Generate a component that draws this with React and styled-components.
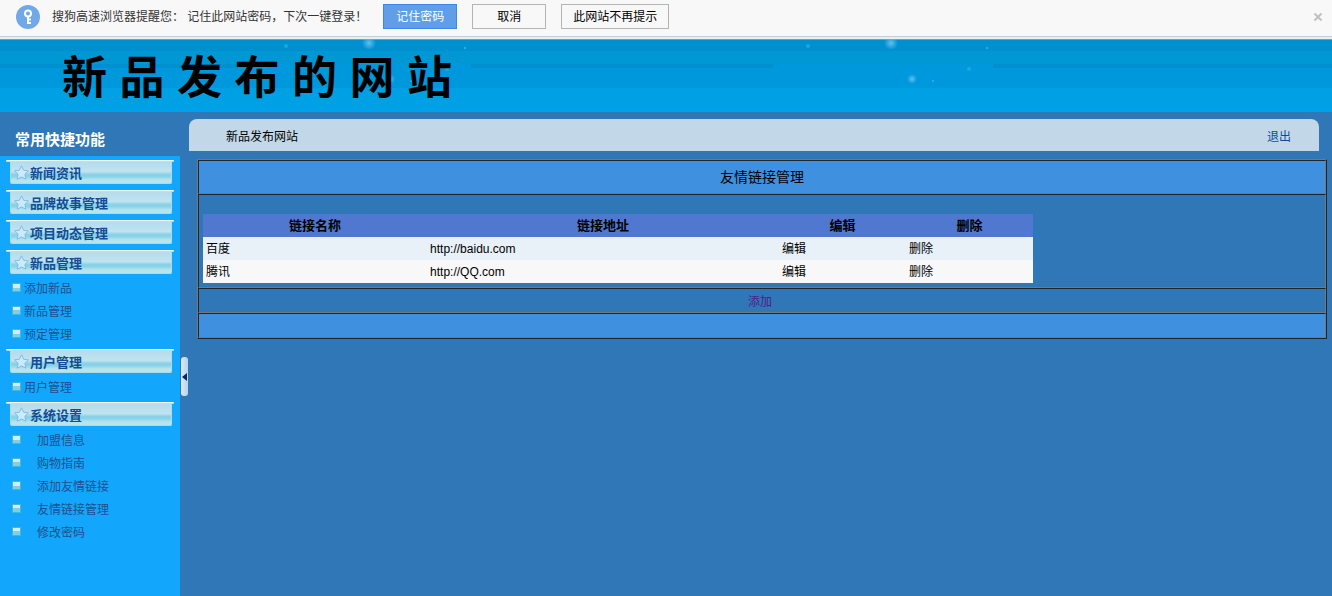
import styled, { createGlobalStyle } from 'styled-components'

const GlobalStyle = createGlobalStyle`
  * {
    box-sizing: border-box;
  }
  body {
    margin: 0;
    background: #3077b8;
    font-family: "Liberation Sans", "Noto Sans CJK SC", sans-serif;
    font-size: 12px;
    color: #000;
  }
  a {
    color: inherit;
    text-decoration: none;
  }
  ul {
    list-style: none;
    margin: 0;
    padding: 0;
  }
`

const Page = styled.div`
  display: flex;
  flex-direction: column;
  min-height: 100vh;
`

const NoticeBar = styled.div`
  display: flex;
  align-items: center;
  gap: 15px;
  padding: 4px 9px 7px 16px;
  background: #f8f8f8;
  border-bottom: 1px solid #ccc;
`

const NoticeText = styled.div`
  display: flex;
  align-items: center;
  gap: 12px;
  padding-right: 1px;
  line-height: 24px;
  color: #333;
  white-space: nowrap;
`

const NoticeButton = styled.button`
  min-width: 74px;
  height: 25px;
  padding: 2px 11px 0;
  border: 1px solid ${({ $primary }) => ($primary ? '#4088e8' : '#b4b4b4')};
  background: ${({ $primary }) => ($primary ? '#609ee8' : '#f8f8f8')};
  color: ${({ $primary }) => ($primary ? '#fff' : '#000')};
  font: inherit;
  line-height: 21px;
`

const CloseButton = styled.button`
  display: flex;
  margin-left: auto;
  padding: 0;
  border: 0;
  background: none;
`

const Banner = styled.header`
  position: relative;
  height: 75px;
  padding: 7px 62px 0;
  border-top: 2px solid #e4f0f8;
  background: linear-gradient(
    #58a8cc 0 1px,
    #0090d0 1px 12px,
    #0098d4 12px 25px,
    #0090d0 25px 29px,
    #0098dc 29px 49px,
    #00a0e4 49px 70px,
    #00a0ec 70px
  );
`

const SiteTitle = styled.h1`
  position: relative;
  margin: 0;
  font-size: 45px;
  line-height: 66px;
  font-weight: 700;
  white-space: nowrap;
`

const Sparkles = styled.svg`
  position: absolute;
  top: 0;
  left: ${({ $left }) => $left}px;
`

const Main = styled.div`
  display: flex;
  flex: 1;
`

const Sidebar = styled.nav`
  flex: 0 0 180px;
  display: flex;
  flex-direction: column;
`

const SidebarTitle = styled.h2`
  margin: 0;
  padding: 13px 15px 1px;
  font-size: 15px;
  line-height: 30px;
  color: #fff;
`

const Menu = styled.div`
  flex: 1;
  background: #12a7fd;
`

const GroupTitle = styled.h3`
  margin: 0;
  padding: 4px 6px 2px;
  font-size: 13px;
  color: #144c94;
`

const GroupLine = styled.div`
  height: 2px;
  border-radius: 1px;
  background: linear-gradient(#fff 1px, #b8e0f8 1px);
`

const GroupLink = styled.a`
  display: flex;
  align-items: center;
  height: 22px;
  margin: 0 2px 0 4px;
  padding: 0 2px 0 3px;
  gap: 1px;
  border: 1px solid #a8dce8;
  border-top: 0;
  border-radius: 0 0 2px 2px;
  background: linear-gradient(#b4dcec, #c0e4f0 45%, #88d0e8 60%, #88d4e8 70%, #b8e4ec 85%);
`

const SubItem = styled.li`
  display: flex;
  align-items: center;
  gap: ${({ $wide }) => ($wide ? 16 : 3)}px;
  height: 23px;
  padding: 0 0 1px 12px;
  color: #20508c;
`

const Bullet = styled.i`
  width: 9px;
  height: 9px;
  border: 1px solid #40b8d8;
  background: linear-gradient(#d0ecf4 50%, #80d0e4 50%);
`

const Splitter = styled.div`
  flex: 0 0 9px;
  padding: 245px 1px 0;
`

const SplitterHandle = styled.button`
  display: flex;
  align-items: center;
  justify-content: center;
  width: 7px;
  height: 39px;
  padding: 0;
  border: 0;
  border-radius: 3px;
  background: linear-gradient(90deg, #d8e8f4, #b8d4ec);
`

const Content = styled.main`
  flex: 1;
  min-width: 0;
  padding: 7px 5px 0 0;
`

const TopBar = styled.div`
  display: flex;
  justify-content: space-between;
  margin-right: 8px;
  padding: 4px 28px 0 37px;
  line-height: 28px;
  border-radius: 8px 8px 0 0;
  background: #c2d8e8;
  a {
    color: #0c4c98;
  }
`

/* outset frame, with inset cells inside it */
const Panel = styled.section`
  margin: 8px 0 0 8px;
  border: 1px solid;
  border-color: #787878 #242424 #242424 #787878;
`

const PanelCell = styled.div`
  min-height: 25px;
  border: 1px solid;
  border-color: #242424 #787878 #787878 #242424;
  text-align: center;
  background: ${({ $bright }) => ($bright ? '#4090e0' : 'transparent')};
`

const PanelTitle = styled.h2`
  margin: 0;
  font-size: 14px;
  line-height: 32px;
  font-weight: 400;
`

const AddLink = styled.a`
  display: block;
  padding: 3px 4px 0 0;
  line-height: 20px;
  color: #551a8b;
`

const LinkTable = styled.table`
  width: 830px;
  max-width: 100%;
  margin: 19px 4px 4px;
  border-collapse: collapse;
  table-layout: fixed;
  text-align: left;
  th,
  td {
    height: 23px;
    padding: 2px 3px 0;
    line-height: 21px;
  }
  th {
    padding-top: 0;
    line-height: 23px;
    font-size: 13px;
    text-align: center;
    background: #5078d0;
  }
  tbody tr {
    background: #f8f8f8;
  }
  tbody tr:nth-child(odd) {
    background: #e8f0f8;
  }
`

const Col = styled.col`
  width: ${({ $width }) => $width};
`

const menu = [
  { title: '新闻资讯', items: [] },
  { title: '品牌故事管理', items: [] },
  { title: '项目动态管理', items: [] },
  { title: '新品管理', items: ['添加新品', '新品管理', '预定管理'] },
  { title: '用户管理', items: ['用户管理'] },
  {
    title: '系统设置',
    wide: true,
    items: ['加盟信息', '购物指南', '添加友情链接', '友情链接管理', '修改密码'],
  },
]

const links = [
  { name: '百度', url: 'http://baidu.com' },
  { name: '腾讯', url: 'http://QQ.com' },
]

function KeyIcon() {
  return (
    <svg width="24" height="24" viewBox="0 0 24 24" fill="none">
      <circle cx="12" cy="12" r="12" fill="#70a8e8" />
      <circle cx="12" cy="8.5" r="3" stroke="#fff" strokeWidth="2" />
      <path d="M12 11.5V19M12 14.5h3M12 18h3" stroke="#fff" strokeWidth="2" />
    </svg>
  )
}

function StarIcon() {
  return (
    <svg width="15" height="16" viewBox="0 0 15 16">
      <path
        d="M7.5 .8l2.1 4.4 4.8.7-3.5 3.4.9 4.9-4.3-2.3-4.3 2.3.9-4.9L.6 5.9l4.8-.7z"
        fill="#c8ecfc"
        stroke="#88b8e4"
        strokeLinejoin="round"
      />
    </svg>
  )
}

function BannerSparkles({ left }) {
  return (
    <Sparkles $left={left} width="240" height="73" aria-hidden="true">
      <defs>
        <radialGradient id={`glow${left}`}>
          <stop offset="0" stopColor="#60c0f0" />
          <stop offset="1" stopColor="#60c0f0" stopOpacity="0" />
        </radialGradient>
      </defs>
      <path d="M3 25h220v24H3z" fill="#0098dc" />
      <circle cx="121" cy="4" r="7" fill={`url(#glow${left})`} />
      <circle cx="142" cy="40" r="5" fill={`url(#glow${left})`} />
      <circle cx="38" cy="7" r="2" fill="#18a8dc" />
      <circle cx="217" cy="9" r="1" fill="#40b4e4" />
      <circle cx="199" cy="30" r="2" fill="#18a8e0" />
      <circle cx="163" cy="42" r="1" fill="#30b0e8" />
    </Sparkles>
  )
}

function MenuGroup({ group }) {
  return (
    <>
      <GroupTitle>
        <GroupLine />
        <GroupLink href="#">
          <StarIcon />
          {group.title}
        </GroupLink>
      </GroupTitle>
      <ul>
        {group.items.map((item) => (
          <SubItem key={item} $wide={group.wide}>
            <Bullet />
            <a href="#">{item}</a>
          </SubItem>
        ))}
      </ul>
    </>
  )
}

export default function App() {
  return (
    <Page>
      <GlobalStyle />
      <NoticeBar>
        <NoticeText>
          <KeyIcon />
          <span>搜狗高速浏览器提醒您： 记住此网站密码，下次一键登录！</span>
        </NoticeText>
        <NoticeButton $primary>记住密码</NoticeButton>
        <NoticeButton>取消</NoticeButton>
        <NoticeButton>此网站不再提示</NoticeButton>
        <CloseButton aria-label="关闭">
          <svg width="10" height="10" viewBox="0 0 10 10">
            <path d="M1.5 1.5l7 7M8.5 1.5l-7 7" stroke="#c0c0c0" strokeWidth="2" />
          </svg>
        </CloseButton>
      </NoticeBar>
      <Banner>
        <BannerSparkles left={248} />
        <BannerSparkles left={770} />
        <SiteTitle>新 品 发 布 的 网 站</SiteTitle>
      </Banner>
      <Main>
        <Sidebar>
          <SidebarTitle>常用快捷功能</SidebarTitle>
          <Menu>
            {menu.map((group) => (
              <MenuGroup key={group.title} group={group} />
            ))}
          </Menu>
        </Sidebar>
        <Splitter>
          <SplitterHandle aria-label="收起菜单">
            <svg width="5" height="8" viewBox="0 0 5 8">
              <path d="M5 0v8L0 4z" fill="#082858" />
            </svg>
          </SplitterHandle>
        </Splitter>
        <Content>
          <TopBar>
            <span>新品发布网站</span>
            <a href="#">退出</a>
          </TopBar>
          <Panel>
            <PanelCell $bright>
              <PanelTitle>友情链接管理</PanelTitle>
            </PanelCell>
            <PanelCell>
              <LinkTable>
                <colgroup>
                  <Col $width="27%" />
                  <Col $width="42.4%" />
                  <Col />
                  <Col />
                </colgroup>
                <thead>
                  <tr>
                    <th>链接名称</th>
                    <th>链接地址</th>
                    <th>编辑</th>
                    <th>删除</th>
                  </tr>
                </thead>
                <tbody>
                  {links.map((link) => (
                    <tr key={link.url}>
                      <td>{link.name}</td>
                      <td>{link.url}</td>
                      <td><a href="#">编辑</a></td>
                      <td><a href="#">删除</a></td>
                    </tr>
                  ))}
                </tbody>
              </LinkTable>
            </PanelCell>
            <PanelCell>
              <AddLink href="#">添加</AddLink>
            </PanelCell>
            <PanelCell $bright />
          </Panel>
        </Content>
      </Main>
    </Page>
  )
}
